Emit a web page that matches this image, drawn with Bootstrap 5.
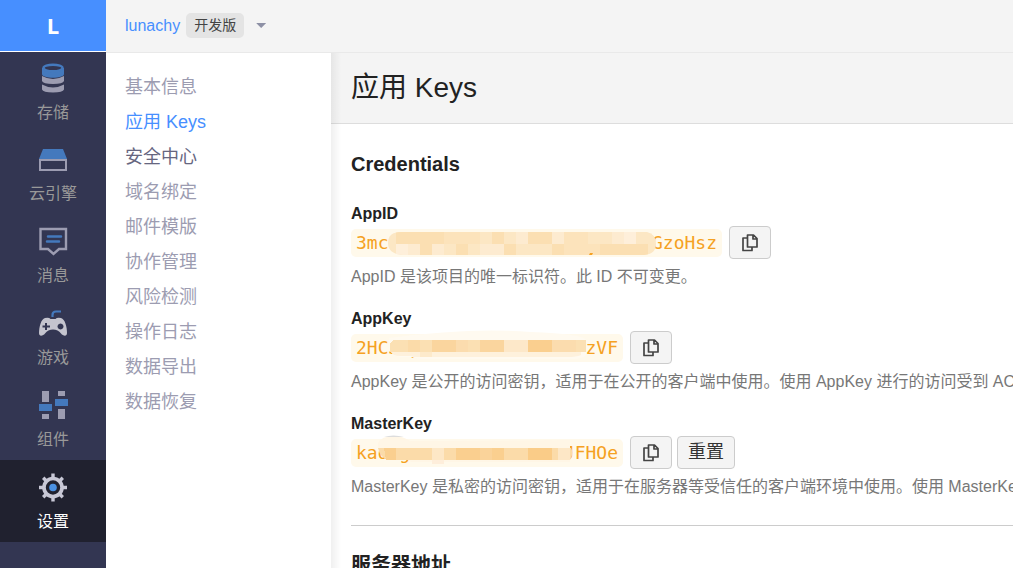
<!DOCTYPE html>
<html lang="zh-CN">
<head>
<meta charset="utf-8">
<meta name="viewport" content="width=device-width, initial-scale=1">
<title>应用 Keys</title>
<link href="https://cdn.jsdelivr.net/npm/bootstrap@5.3.0/dist/css/bootstrap.min.css" rel="stylesheet">
<style>
body { font-family: "Liberation Sans", "Noto Sans CJK SC", sans-serif; font-size: 16px; line-height: 24px; color: #222; background: #fff; }
.side-rail { width: 106px; background: #333652; }
.app-logo { height: 52px; background: #478fff; border-bottom: 1px solid #fff; font: 700 22px/50px "Open Sans", sans-serif; }
.rail-link { height: 82px; padding-top: 12px; color: #999; gap: 8px; }
.rail-link:first-child { height: 80px; padding-top: 11px; }
.rail-link.active { background: #20212f; color: #fff; }
.top-bar { height: 53px; background: #f4f4f4; border-bottom: 1px solid #e9e9e9; padding: 0 19px 1px; }
.top-bar a, .sub-menu a.active { color: #478fff; }
.env-tag { background: #e4e4e4; color: #444; font-size: 14px; line-height: 25px; border-radius: 5px; padding: 0 8px; margin-left: 6px; }
.drop-arrow { width: 10px; height: 5px; background: #8d90a5; clip-path: polygon(0 0, 100% 0, 50% 100%); }
.sub-menu { width: 225px; padding: 17px 19px; font-size: 18px; line-height: 35px; }
.sub-menu a { color: #9c9cb1; }
.sub-menu a.strong-item { color: #66667f; }
.content-pane { position: relative; }
.content-pane::before { content: ""; position: absolute; top: 0; bottom: 0; left: 0; width: 10px; background: linear-gradient(90deg, rgba(0,0,0,.06), transparent); }
.page-head { background: #f4f4f4; border-bottom: 1px solid #ddd; height: 71px; padding: 0 20px; }
.page-head h1 { font-size: 28px; line-height: 36px; font-weight: 400; }
.page-body { padding: 25px 0 25px 20px; }
.page-body h2 { font-size: 20px; line-height: 30px; font-weight: 700; margin: 0 0 23px; }
.page-body hr { margin: 26px 0 24px; border-color: #ccc; opacity: 1; }
.key-block { margin-bottom: 18px; }
.key-block h3 { font-size: 16px; line-height: 24px; font-weight: 700; margin: 0; }
.key-block p { color: #777; margin: 6px 0 0; }
.key-row { gap: 5px; }
.key-code { position: relative; height: 28px; padding: 0 5px; border-radius: 5px; background: #fff9eb; color: #f5a122; font: 18px/28px "DejaVu Sans Mono", monospace; white-space: pre; margin-right: 2px; }
.key-code svg { position: absolute; left: 0; top: -5px; }
.key-long { width: 371px; }
.key-short { width: 272px; }
.tool-btn { height: 33px; min-width: 42px; padding: 0 10px; border: 1px solid #ccc; border-radius: 4px; background: #f4f4f4; color: #333; font-size: 18px; line-height: 29px; }
</style>
</head>
<body>
<div class="d-flex vh-100 overflow-hidden">
  <aside class="side-rail flex-shrink-0">
    <a href="#" class="app-logo d-block text-center text-white text-decoration-none">L</a>
    <nav>
      <a href="#" class="rail-link d-flex flex-column align-items-center text-decoration-none">
        <svg width="30" height="30" viewBox="0 0 30 30"><path d="M4 5v6c0 5 22 5 22 0V5z" fill="#4479bd"/><ellipse cx="15" cy="5" rx="9.500" ry="3.200" fill="#333652" stroke="#4479bd" stroke-width="2.400"/><path d="M4 13q11 6 22 0v5q-1 3-11 3T4 18zM4 21.500q11 6 22 0v5q-1 3-11 3T4 26.500z" fill="#9c9cb1"/></svg>
        <span>存储</span></a>
      <a href="#" class="rail-link d-flex flex-column align-items-center text-decoration-none">
        <svg width="30" height="30" viewBox="0 0 30 30"><path d="M5 5h20l4 10H1z" fill="#4479bd"/><path d="M2 16h26v10H2z" fill="none" stroke="#9c9cb1" stroke-width="2"/></svg>
        <span>云引擎</span></a>
      <a href="#" class="rail-link d-flex flex-column align-items-center text-decoration-none">
        <svg width="30" height="30" viewBox="0 0 30 30"><path d="M2.500 3h25.500v20h-7l-5.500 5-5.500-5H2.500z" fill="none" stroke="#9c9cb1" stroke-width="2.400"/><path d="M10 10.500h13M9 15.500h12" stroke="#4479bd" stroke-width="2.500" stroke-linecap="round"/></svg>
        <span>消息</span></a>
      <a href="#" class="rail-link d-flex flex-column align-items-center text-decoration-none">
        <svg width="30" height="30" viewBox="0 0 30 30"><path d="M14.500 9V7q0-3.500 3.500-3.500h5" fill="none" stroke="#4479bd" stroke-width="2.200"/><path fill-rule="evenodd" d="M7 10q4-1 5.500 1h5Q19 9 23 10c4 1 6 9 6 15 0 4-4 3-6 .5q-3-4-8-4t-8 4C5 28 1 29 1 25 1 19 3 11 7 10zM7 15v2.500H4.500v2H7V22h2v-2.500h3v-2H9V15zM22.500 15.500a3 3 0 1 0 .01 0z" fill="#c4c4ce"/></svg>
        <span>游戏</span></a>
      <a href="#" class="rail-link d-flex flex-column align-items-center text-decoration-none">
        <svg width="30" height="30" viewBox="0 0 30 30"><path d="M4 1h7v11H4zM4 24h7v5H4zM20 1h7v5h-7zM20 19h7v10h-7z" fill="#9c9cb1"/><path d="M1 14h13v7H1zM17 9h13v7H17z" fill="#4479bd"/></svg>
        <span>组件</span></a>
      <a href="#" class="rail-link active d-flex flex-column align-items-center text-decoration-none">
        <svg width="30" height="30" viewBox="0 0 30 30"><g stroke="#c8c8d6" fill="none"><circle cx="15" cy="15.500" r="9" stroke-width="3.600"/><path d="M15 1.500v5M15 24.500v5M1 15.500h5M24 15.500h5M5.200 5.700l3.500 3.500M21.300 21.800l3.500 3.500M24.800 5.700l-3.500 3.500M8.700 21.800l-3.500 3.500" stroke-width="3.400"/></g><circle cx="15" cy="15.500" r="3.800" fill="#4a90e2"/></svg>
        <span>设置</span></a>
    </nav>
  </aside>
  <div class="d-flex flex-column flex-grow-1 overflow-hidden">
    <header class="top-bar d-flex align-items-center flex-shrink-0">
      <a href="#" class="text-decoration-none">lunachy</a>
      <span class="env-tag">开发版</span>
      <button type="button" class="btn border-0 p-0 ms-2 d-flex" aria-label="切换应用"><span class="drop-arrow mx-1"></span></button>
    </header>
    <div class="d-flex flex-grow-1 overflow-hidden">
      <nav class="sub-menu d-flex flex-column flex-shrink-0">
        <a href="#" class="text-decoration-none">基本信息</a>
        <a href="#" class="text-decoration-none active">应用 Keys</a>
        <a href="#" class="text-decoration-none strong-item">安全中心</a>
        <a href="#" class="text-decoration-none">域名绑定</a>
        <a href="#" class="text-decoration-none">邮件模版</a>
        <a href="#" class="text-decoration-none">协作管理</a>
        <a href="#" class="text-decoration-none">风险检测</a>
        <a href="#" class="text-decoration-none">操作日志</a>
        <a href="#" class="text-decoration-none">数据导出</a>
        <a href="#" class="text-decoration-none">数据恢复</a>
      </nav>
      <main class="content-pane flex-grow-1 overflow-hidden">
        <div class="page-head d-flex align-items-center"><h1 class="m-0">应用 Keys</h1></div>
        <div class="page-body text-nowrap">
          <h2>Credentials</h2>
          <section class="key-block">
            <h3>AppID</h3>
            <div class="key-row d-flex align-items-center">
              <code class="key-code key-long d-flex justify-content-between"><span>3mc</span><span>GzoHsz</span>
                <svg width="371" height="34" viewBox="0 0 371 34"><defs><clipPath id="c1"><path d="M50 8H296q9 2 9 12t-12 11H52q-15-1-15-12T50 8z"/></clipPath></defs><g clip-path="url(#c1)" shape-rendering="crispEdges"><path d="M33 8h276v24H33z" fill="#fce7c4"/><path d="M45 8h48v12H45zM141 8h12v12h-12zM177 8h24v12h-24zM69 20h12v12H69zM105 20h12v12h-12zM153 20h12v12h-12zM201 20h12v12h-12zM249 20h48v12h-48z" fill="#fbdfb2"/><path d="M93 8h36v12H93zM213 8h24v12h-24zM213 20h36v12h-36z" fill="#fce3bb"/><path d="M165 8h12v12h-12zM201 8h12v12h-12zM57 20h12v12H57zM261 8h12v12h-12zM81 20h12v12H81zM129 20h24v12h-24z" fill="#fdebd0"/><path d="M45 20h12v12H45zM273 8h12v12h-12z" fill="#feefda"/></g><path d="M238 31l1-2h3l-1 2z" fill="#f5a122"/></svg></code>
              <button type="button" class="btn tool-btn d-flex align-items-center justify-content-center" aria-label="复制 AppID"><svg width="18" height="20" viewBox="0 0 18 20" fill="none" stroke="#444" stroke-width="1.700" stroke-linejoin="round"><path d="M6.500 2h6l3.500 3.500V14H6.500zM12 2v4h4M6.500 5H2v12.500h9V14"/></svg></button>
            </div>
            <p>AppID 是该项目的唯一标识符。此 ID 不可变更。</p>
          </section>
          <section class="key-block">
            <h3>AppKey</h3>
            <div class="key-row d-flex align-items-center">
              <code class="key-code key-short d-flex justify-content-between"><span>2HCJ p</span><span>RzVF</span>
                <svg width="272" height="34" viewBox="0 0 272 34"><path d="M38 9Q120-2 180 3q52 2 55 8v15q-4 4-14 4H70l-10-2H50q-11-2-11-10z" fill="#fffaf0"/><g shape-rendering="crispEdges"><path d="M42 11h193v12H39v-9z" fill="#fbe0b3"/><path d="M81 11h24v12H81zM129 11h24v12h-24z" fill="#fad59e"/><path d="M177 11h24v12h-24z" fill="#facf8f"/><path d="M105 11h12v12h-12zM201 11h24v12h-24z" fill="#fbdcae"/><path d="M153 11h24v12h-24z" fill="#fde8c9"/><path d="M57 11h12v12H57z" fill="#fbdba9"/></g><path d="M40 23h190v3q-5 2-13 2H63l-3-1H49q-7 0-9-4z" fill="#fef1dc"/><path d="M69 23h12v5H69z" fill="#fdeacb"/></svg></code>
              <button type="button" class="btn tool-btn d-flex align-items-center justify-content-center" aria-label="复制 AppKey"><svg width="18" height="20" viewBox="0 0 18 20" fill="none" stroke="#444" stroke-width="1.700" stroke-linejoin="round"><path d="M6.500 2h6l3.500 3.500V14H6.500zM12 2v4h4M6.500 5H2v12.500h9V14"/></svg></button>
            </div>
            <p>AppKey 是公开的访问密钥，适用于在公开的客户端中使用。使用 AppKey 进行的访问受到 ACL 的限制。</p>
          </section>
          <section class="key-block">
            <h3>MasterKey</h3>
            <div class="key-row d-flex align-items-center">
              <code class="key-code key-short d-flex justify-content-between"><span>kad g</span><span>JFHOe</span>
                <svg width="272" height="34" viewBox="0 0 272 34"><path d="M27 14V9q3-7 17-7 7 0 15 5l160-1v22H60l-2-2H46z" fill="#fff6e6"/><path d="M33 3q9-3 20 0z" fill="#ddd"/><path d="M27 14h193q3 5-1 12H38q-9-2-11-12z" fill="#fbdba9"/><g shape-rendering="crispEdges"><path d="M33 14h12v12H35zM105 14h24v12h-24zM141 14h12v12h-12z" fill="#facf8f"/><path d="M129 14h12v12h-12z" fill="#fad39a"/><path d="M81 14h12v12H81zM207 14h12v12h-12z" fill="#fde7c6"/><path d="M81 26h12v4H81z" fill="#feeedb"/><path d="M177 14h24v12h-24z" fill="#facc88"/></g></svg></code>
              <button type="button" class="btn tool-btn d-flex align-items-center justify-content-center" aria-label="复制 MasterKey"><svg width="18" height="20" viewBox="0 0 18 20" fill="none" stroke="#444" stroke-width="1.700" stroke-linejoin="round"><path d="M6.500 2h6l3.500 3.500V14H6.500zM12 2v4h4M6.500 5H2v12.500h9V14"/></svg></button>
              <button type="button" class="btn tool-btn">重置</button>
            </div>
            <p>MasterKey 是私密的访问密钥，适用于在服务器等受信任的客户端环境中使用。使用 MasterKey 进行的访问拥有最高权限。</p>
          </section>
          <hr>
          <h2>服务器地址</h2>
        </div>
      </main>
    </div>
  </div>
</div>
<script src="https://cdn.jsdelivr.net/npm/bootstrap@5.3.0/dist/js/bootstrap.bundle.min.js"></script>
</body>
</html>
